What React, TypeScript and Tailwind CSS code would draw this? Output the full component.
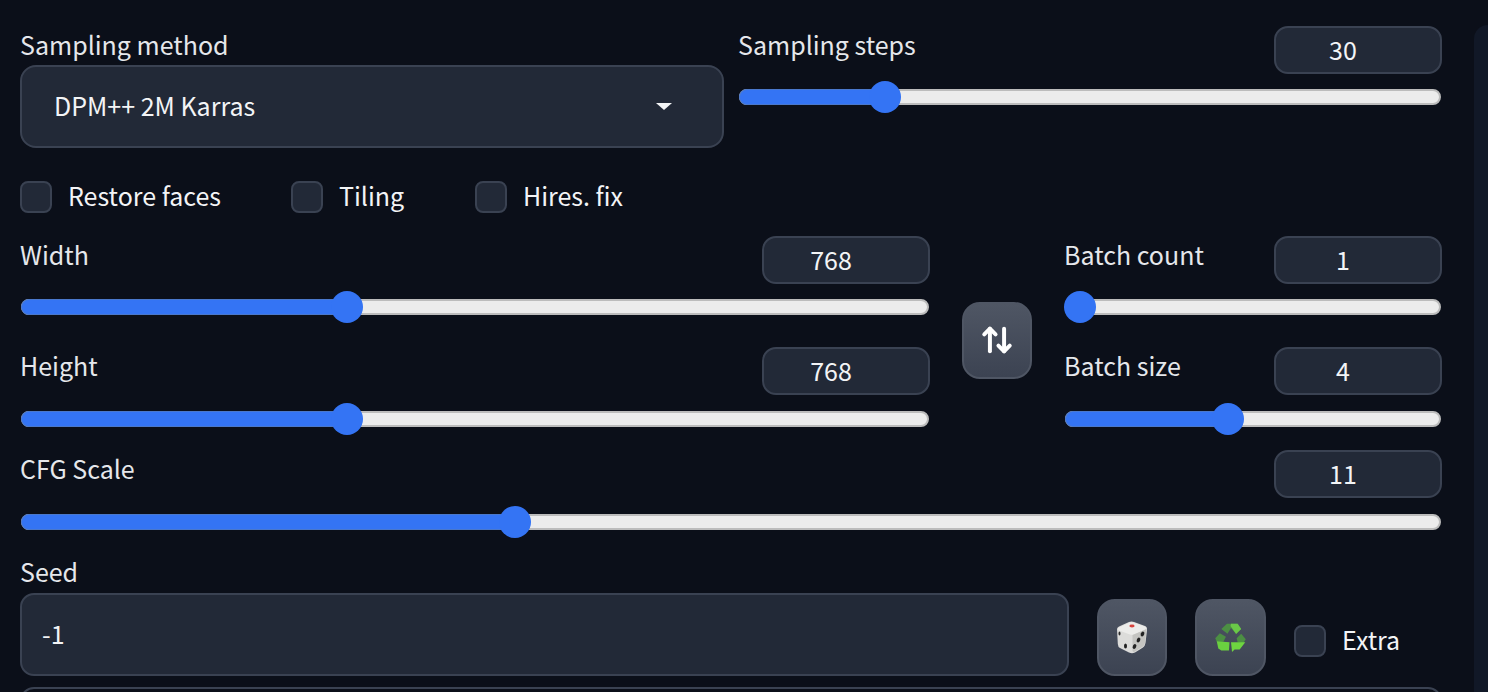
import { ArrowUpDown } from "lucide-react";

const font = "font-['Noto_Sans_CJK_SC','Noto_Sans',sans-serif]";

interface SliderProps {
  label: string;
  value: number;
  offset: number;
  low?: boolean;
  className?: string;
}

const Slider = ({ label, value, offset, low = false, className = "" }: SliderProps) => (
  <div className={`flex flex-col ${className}`}>
    <div className="flex h-[48px] items-start justify-between">
      <span className="mt-[3px] text-[25px] leading-[30px] text-[#e5e7eb]">{label}</span>
      <div className="flex h-[48px] w-[168px] items-center justify-center rounded-[14px] border-2 border-[#3a4252] bg-[#222937] pr-[30px] pb-[3px] text-[25px] leading-[30px] text-[#f3f4f6]">
        {value}
      </div>
    </div>
    <div
      className={`relative mr-[1px] ml-[1px] h-[16px] rounded-full border-2 border-[#bcbcbc] bg-[#ececec] ${low ? "mt-[16px]" : "mt-[15px]"}`}
    >
      <div
        className="absolute top-[-2px] left-[-2px] h-[16px] rounded-l-full border border-r-0 border-[#4a78cc] bg-[#3474f4]"
        style={{ width: offset }}
      />
      <div
        className="absolute top-[-10px] h-[32px] w-[32px] rounded-full bg-[#3474f4]"
        style={{ left: offset - 18 }}
      />
    </div>
  </div>
);

const Checkbox = ({ label, className = "" }: { label: string; className?: string }) => (
  <div className={`flex items-center gap-[16px] ${className}`}>
    <div className="h-[32px] w-[32px] rounded-[8px] border-2 border-[#3a4252] bg-[#222937]" />
    <span className="-mt-[4px] text-[25px] leading-[32px] text-[#f3f4f6]">{label}</span>
  </div>
);

const ToolButton = ({ children, className = "" }: { children: React.ReactNode; className?: string }) => (
  <div
    className={`flex items-center justify-center rounded-[18px] border-2 border-[#4f5664] bg-gradient-to-b from-[#4f5664] to-[#3c4352] ${className}`}
  >
    {children}
  </div>
);

const Dice = () => (
  <svg width="32" height="33" viewBox="0 0 32 33">
    <path d="M1 8 Q1 6.5 3 5.5 L13 1 Q15.5 0 18 1 L29 5 Q31.5 6 31 9 L29.5 22 Q29 25 27 26.5 L19 31.5 Q16 33 13 31.5 L4 27 Q2 26 1.8 23 Z" fill="#dcdcda" />
    <path d="M2 7 L13.5 1.5 Q15.5 0.8 17.5 1.5 L30 6 Q30.5 8 28.5 9 L18 13.5 Q16 14.2 14 13.5 L3 9.5 Q1.8 8.5 2 7 Z" fill="#ececea" />
    <path d="M16.5 14 L30.5 8 L29 22 Q28.5 24.5 27 25.5 L19 30.5 Q17.5 31.5 16.5 30 Z" fill="#c4c4c1" />
    <ellipse cx="16" cy="5" rx="2.6" ry="1.4" fill="#d8423d" />
    <ellipse cx="3.5" cy="12.5" rx="1" ry="2" fill="#2b2b2b" />
    <ellipse cx="9.5" cy="25" rx="1.5" ry="2.6" fill="#222222" />
    <ellipse cx="26.5" cy="13" rx="1.7" ry="2.5" fill="#222222" transform="rotate(25 26.5 13)" />
    <ellipse cx="22.5" cy="19" rx="1.7" ry="2.5" fill="#222222" transform="rotate(25 22.5 19)" />
    <ellipse cx="18.5" cy="25.5" rx="1.7" ry="2.5" fill="#222222" transform="rotate(25 18.5 25.5)" />
  </svg>
);

const Recycle = () => (
  <svg width="31" height="29" viewBox="0 0 30 28.5">
    <path d="M6 6 L11.5 0.7 H22 L25.5 6 L20.5 10.5 L15.5 5 L12 10.5 Z" fill="#4c8f43" />
    <path d="M15.5 0.7 H22 L25.5 6 L20.5 10.7 L15 3 Z" fill="#6ac848" />
    <path d="M0 15 L4.5 10 L10.5 13.5 L8 18.5 L1.5 18.5 Z" fill="#4c8f43" />
    <path d="M1.5 18 L14 19 L13.5 27 H6 L3 25 Z" fill="#6ad040" />
    <path d="M21 15 L25.5 10.5 L30 16 L27.5 20 L22 19 Z" fill="#4c8f43" />
    <path d="M15.5 19 H29.5 L24 26 H19 L16.5 28.5 Z" fill="#6ed540" />
  </svg>
);

export default function App() {
  return (
    <div className={`flex h-[692px] w-[1488px] overflow-hidden bg-[#0b0f19] ${font}`}>
      <div className="ml-[20px] flex w-[1422px] flex-col">
        <div className="mt-[26px] flex gap-[14px]">
          <div className="flex w-[704px] flex-col">
            <span className="mt-[3px] text-[25px] leading-[30px] text-[#e5e7eb]">Sampling method</span>
            <div className="mt-[6px] flex h-[83px] items-center justify-between rounded-[16px] border-2 border-[#3a4252] bg-[#222937] pr-[50px] pl-[32px]">
              <span className="pb-[4px] text-[25px] leading-[30px] text-[#f3f4f6]">DPM++ 2M Karras</span>
              <div className="h-0 w-0 border-x-[8px] border-t-[7px] border-x-transparent border-t-[#f3f4f6]" />
            </div>
          </div>
          <Slider label="Sampling steps" value={30} offset={146} className="flex-1" />
        </div>

        <div className="mt-[33px] flex">
          <Checkbox label="Restore faces" className="w-[271px]" />
          <Checkbox label="Tiling" className="w-[184px]" />
          <Checkbox label="Hires. fix" />
        </div>

        <div className="mt-[23px] flex">
          <div className="flex w-[910px] flex-col">
            <Slider label="Width" value={768} offset={326} />
            <Slider label="Height" value={768} offset={326} low className="mt-[32px]" />
          </div>
          <ToolButton className="mt-[66px] ml-[32px] h-[77px] w-[70px]">
            <ArrowUpDown size={34} strokeWidth={2.8} color="#ffffff" className="mb-[2px]" />
          </ToolButton>
          <div className="ml-[32px] flex flex-1 flex-col">
            <Slider label="Batch count" value={1} offset={15} />
            <Slider label="Batch size" value={4} offset={163} low className="mt-[32px]" />
          </div>
        </div>

        <Slider label="CFG Scale" value={11} offset={494} low className="mt-[23px]" />

        <div className="mt-[26px] flex flex-col">
          <span className="text-[25px] leading-[30px] text-[#e5e7eb]">Seed</span>
          <div className="mt-[7px] flex">
            <div className="flex h-[83px] w-[1049px] items-center rounded-[14px] border-2 border-[#3a4252] bg-[#222937] pb-[4px] pl-[20px] text-[25px] leading-[30px] text-[#f3f4f6]">
              -1
            </div>
            <ToolButton className="mt-[6px] ml-[28px] h-[77px] w-[70px]">
              <Dice />
            </ToolButton>
            <ToolButton className="mt-[6px] ml-[28px] h-[77px] w-[71px]">
              <Recycle />
            </ToolButton>
            <Checkbox label="Extra" className="mt-[32px] ml-[28px] h-[32px]" />
          </div>
          <div className="mt-[11px] h-[40px] rounded-t-[14px] border-2 border-[#3a4252] bg-[#0b0f19]" />
        </div>
      </div>
      <div className="mt-[25px] ml-[32px] flex-1 rounded-tl-[14px] bg-[#111827]" />
    </div>
  );
}
